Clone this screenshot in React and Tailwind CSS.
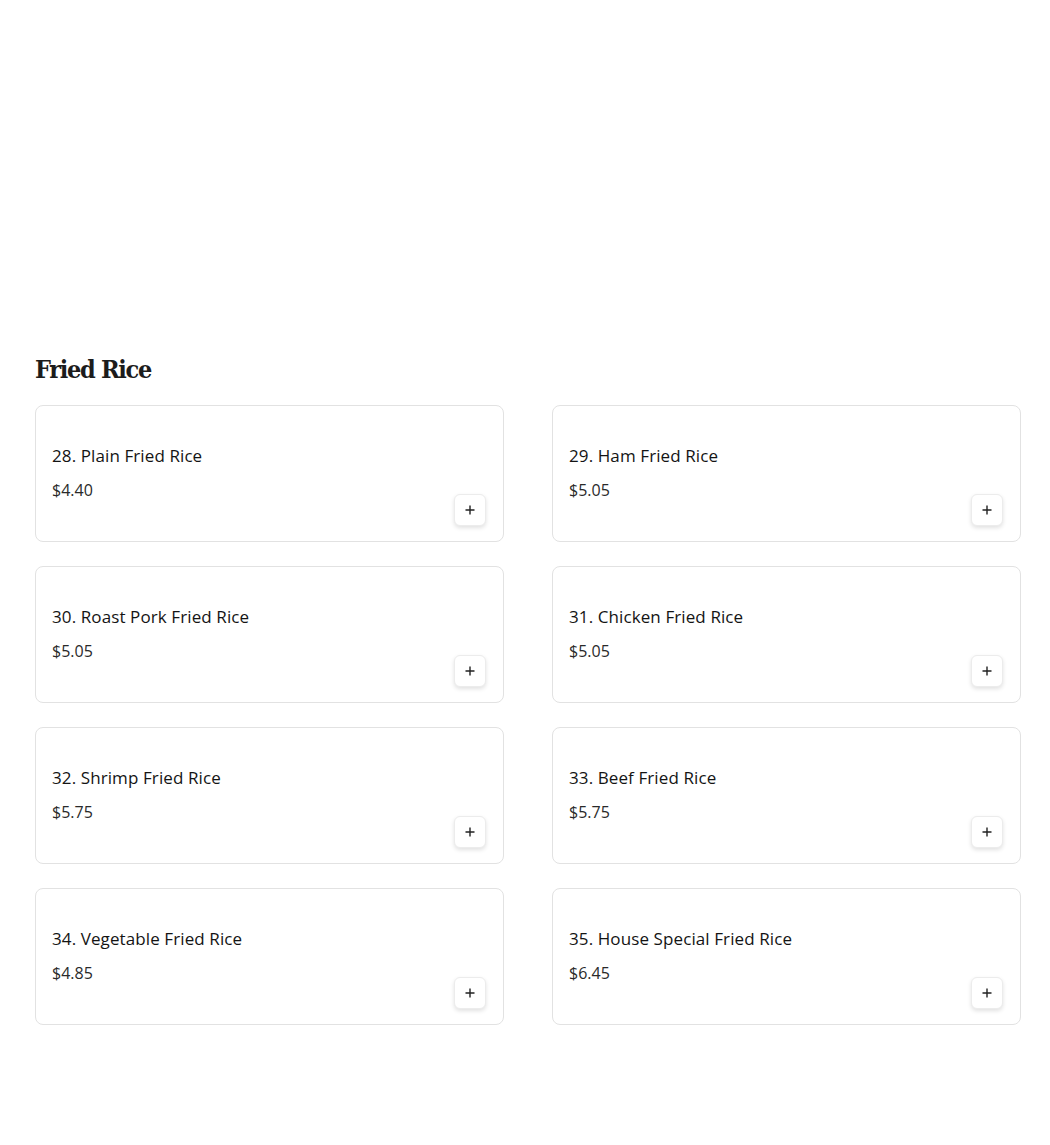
import React from "react";

const items = [
  { name: "28. Plain Fried Rice", price: "$4.40" },
  { name: "29. Ham Fried Rice", price: "$5.05" },
  { name: "30. Roast Pork Fried Rice", price: "$5.05" },
  { name: "31. Chicken Fried Rice", price: "$5.05" },
  { name: "32. Shrimp Fried Rice", price: "$5.75" },
  { name: "33. Beef Fried Rice", price: "$5.75" },
  { name: "34. Vegetable Fried Rice", price: "$4.85" },
  { name: "35. House Special Fried Rice", price: "$6.45" },
];

function MenuCard({ item }) {
  return (
    <div className="h-[137px] border border-[#e2e2e2] rounded-lg bg-white pl-4 pr-[16px] pb-[15px] flex justify-between items-end">
      <div className="self-start pt-[38px]">
        <div className="text-[17px] leading-6 font-medium text-[#141414] tracking-[0.1px]">
          {item.name}
        </div>
        <div className="mt-[10px] text-[16px] leading-6 text-[#2a2a2a]">
          {item.price}
        </div>
      </div>
      <button className="w-8 h-8 mr-[1px] rounded-md bg-white border border-[#ececec] shadow-[0_2px_4px_rgba(0,0,0,0.12)] flex items-center justify-center text-[#222]">
        <svg width="12" height="12" viewBox="0 0 12 12">
          <path d="M6 1.5v9M1.5 6h9" stroke="currentColor" strokeWidth="1.4" />
        </svg>
      </button>
    </div>
  );
}

export default function App() {
  return (
    <div
      className="min-h-[1145px] bg-white pt-[352px] pl-[35px] pr-[29px]"
      style={{ fontFamily: '"Open Sans", "Liberation Sans", sans-serif' }}
    >
      <h2
        className="text-[25px] leading-9 font-black text-[#1c1c1c] tracking-[-1.3px] font-stretch-condensed"
        style={{ fontFamily: '"DejaVu Serif Condensed", "DejaVu Serif", serif' }}
      >
        Fried Rice
      </h2>
      <div className="mt-[17px] grid grid-cols-2 gap-x-[48px] gap-y-[24px]">
        {items.map((item, i) => (
          <MenuCard key={i} item={item} />
        ))}
      </div>
    </div>
  );
}
